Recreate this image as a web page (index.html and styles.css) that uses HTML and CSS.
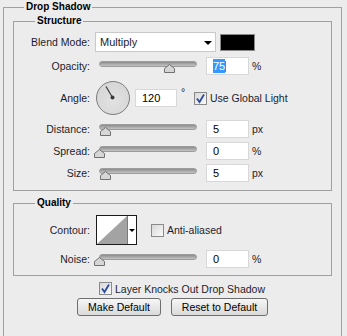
FILE: index.html
```html
<!DOCTYPE html>
<html lang="en">
<head>
  <meta charset="UTF-8">
  <meta name="viewport" content="width=device-width, initial-scale=1.0">
  <title>Layer Style - Drop Shadow</title>
  <link rel="stylesheet" href="styles.css">
</head>
<body>
  <fieldset class="group outer">
    <legend>Drop Shadow</legend>

    <fieldset class="group sub structure">
      <legend>Structure</legend>

      <div class="row blend">
        <span class="lbl">Blend Mode:</span>
        <div class="select">Multiply<span class="caret"></span></div>
        <div class="swatch"></div>
      </div>

      <div class="row opacity">
        <span class="lbl">Opacity:</span>
        <div class="slider"><span class="track"></span><span class="thumb" style="left: 69px"></span></div>
        <div class="field"><span class="sel">75</span><span class="cursor"></span></div>
        <span class="unit">%</span>
      </div>

      <div class="row angle">
        <span class="lbl">Angle:</span>
        <div class="dial">
          <svg width="34" height="34" viewBox="0 0 34 34">
            <line x1="16.5" y1="16.5" x2="10" y2="5.5" stroke="#3a3a3a" stroke-width="1.2"/>
            <circle cx="16.5" cy="16.5" r="2" fill="#3a3a3a"/>
          </svg>
        </div>
        <div class="field small">120</div>
        <span class="deg">°</span>
        <span class="check on"><svg width="11" height="11" viewBox="0 0 11 11"><path d="M2 5.5 L4.5 9 L9 1.5" fill="none" stroke="#2c4c9c" stroke-width="1.8"/></svg></span>
        <span class="check-text">Use Global Light</span>
      </div>

      <div class="row dist">
        <span class="lbl">Distance:</span>
        <div class="slider"><span class="track"></span><span class="thumb" style="left: 5px"></span></div>
        <div class="field">5</div>
        <span class="unit">px</span>
      </div>

      <div class="row spread">
        <span class="lbl">Spread:</span>
        <div class="slider"><span class="track"></span><span class="thumb" style="left: -1px"></span></div>
        <div class="field">0</div>
        <span class="unit">%</span>
      </div>

      <div class="row size">
        <span class="lbl">Size:</span>
        <div class="slider"><span class="track"></span><span class="thumb" style="left: 5px"></span></div>
        <div class="field">5</div>
        <span class="unit">px</span>
      </div>
    </fieldset>

    <fieldset class="group sub quality">
      <legend>Quality</legend>

      <div class="row contour">
        <span class="lbl">Contour:</span>
        <div class="contour-box">
          <svg class="curve" width="30" height="28" viewBox="0 0 30 28">
            <polygon points="0,28 30,0 30,28" fill="#a3a3a3"/>
          </svg>
          <span class="contour-arrow"><span class="caret"></span></span>
        </div>
        <span class="check"></span>
        <span class="check-text">Anti-aliased</span>
      </div>

      <div class="row noise">
        <span class="lbl">Noise:</span>
        <div class="slider"><span class="track"></span><span class="thumb" style="left: -1px"></span></div>
        <div class="field">0</div>
        <span class="unit">%</span>
      </div>
    </fieldset>

    <div class="knock">
      <span class="check on"><svg width="11" height="11" viewBox="0 0 11 11"><path d="M2 5.5 L4.5 9 L9 1.5" fill="none" stroke="#2c4c9c" stroke-width="1.8"/></svg></span>
      <span class="check-text">Layer Knocks Out Drop Shadow</span>
    </div>

    <div class="buttons">
      <button class="btn make">Make Default</button>
      <button class="btn reset">Reset to Default</button>
    </div>
  </fieldset>
</body>
</html>
```

FILE: styles.css
```css
body {
  margin: 0;
  background: #ececec;
  font-family: 'Liberation Sans', Arial, sans-serif;
  font-size: 10.5px;
  color: #1c1c2c;
  overflow: hidden;
}

.group {
  margin: 0;
  padding: 0;
  border: 1px solid #a0a0a0;
  min-width: 0;
}

.group legend {
  padding: 0 2px;
  font-size: 10px;
  font-weight: bold;
  line-height: 14px;
  color: #000;
}

.outer {
  width: 319px;
  margin-left: 3px;
  padding: 0 9px 40px;
}

.outer > legend {
  margin-left: 11px;
}

.sub > legend {
  margin-left: 21px;
}

.structure {
  padding-bottom: 8px;
}

.quality {
  margin-top: 5px;
  padding-bottom: 7px;
}

.row {
  display: flex;
  align-items: center;
  height: 18px;
  margin-top: 4px;
}

.lbl {
  width: 76px;
  margin-right: 5px;
  text-align: right;
}

.blend {
  height: 20px;
  margin-top: 4px;
}

.opacity {
  margin-top: 5px;
}

.angle {
  height: 34px;
  margin-top: 6px;
}

.dist {
  margin-top: 5px;
}

.contour {
  height: 30px;
  margin-top: 5px;
}

.noise {
  margin-top: 5px;
}

/* dropdown + colour */
.select {
  position: relative;
  box-sizing: border-box;
  width: 121px;
  height: 20px;
  padding-left: 4px;
  line-height: 18px;
  background: #fff;
  border: 1px solid #c9c9c9;
  font-size: 11px;
}

.caret {
  display: inline-block;
  width: 0;
  height: 0;
  border-left: 4px solid transparent;
  border-right: 4px solid transparent;
  border-top: 4px solid #000;
}

.select .caret {
  position: absolute;
  right: 3px;
  top: 8px;
}

.swatch {
  box-sizing: border-box;
  width: 35px;
  height: 17px;
  margin-left: 4px;
  background: #000;
  border: 1px solid #8a8a8a;
}

/* sliders */
.slider {
  position: relative;
  width: 106px;
  height: 18px;
}

.track {
  position: absolute;
  left: 4px;
  right: 4px;
  top: 4px;
  height: 4px;
  border-radius: 3px;
  background: linear-gradient(#8c8c8c, #c4c4c4);
  border: 1px solid #9c9c9c;
}

.thumb {
  position: absolute;
  top: 7px;
  width: 11px;
  height: 9px;
  background: url("data:image/svg+xml;utf8,<svg xmlns='http://www.w3.org/2000/svg' width='11' height='9'><path d='M0.5 8.5 V4.5 L5.5 0.5 L10.5 4.5 V8.5 Z' fill='%23d6d6d6' stroke='%23707070'/></svg>") no-repeat;
}

.field {
  box-sizing: border-box;
  width: 43px;
  height: 18px;
  margin-left: 5px;
  padding-left: 6px;
  line-height: 16px;
  background: #fff;
  border: 1px solid #d8d8d8;
  color: #000;
  font-size: 11px;
}

.field.small {
  width: 42px;
  margin-left: 5px;
}

.sel {
  background: #3399ff;
  color: #fff;
  padding: 1px 0;
}

.cursor {
  display: inline-block;
  width: 1px;
  height: 11px;
  vertical-align: -2px;
  background: #d46a00;
}

.unit {
  margin-left: 3px;
}

/* angle */
.dial {
  box-sizing: border-box;
  width: 34px;
  height: 34px;
  margin-left: 1px;
  border: 1px solid #7c7c7c;
  border-radius: 50%;
  background: radial-gradient(circle at 50% 60%, #e2e2e2, #d2d2d2);
}

.dial svg {
  display: block;
  margin: -1px;
}

.deg {
  align-self: flex-start;
  margin-top: 5px;
  margin-left: 4px;
  width: 8px;
}

.check {
  box-sizing: border-box;
  display: inline-flex;
  align-items: center;
  justify-content: center;
  width: 13px;
  height: 13px;
  border: 1px solid #8a8a8a;
  background: linear-gradient(135deg, #d8d8d8, #fafafa);
}

.angle .check {
  margin-left: 5px;
}

.check-text {
  margin-left: 3px;
}

/* contour */
.contour-box {
  display: flex;
  box-sizing: border-box;
  width: 41px;
  height: 30px;
  margin-left: 1px;
  border: 1px solid #1a1a1a;
  background: #fff;
}

.curve {
  display: block;
  width: 30px;
  height: 28px;
  border-right: 1px solid #7a7a7a;
}

.contour-arrow {
  flex: 1;
  display: flex;
  align-items: center;
  justify-content: center;
}

.contour-arrow .caret {
  border-left-width: 3px;
  border-right-width: 3px;
  border-top-width: 3px;
}

.contour .check {
  margin-left: 14px;
}

/* bottom */
.knock {
  display: flex;
  align-items: center;
  margin-top: 6px;
  padding-left: 86px;
}

.buttons {
  display: flex;
  justify-content: center;
  gap: 10px;
  margin-top: 3px;
}

.btn {
  height: 18px;
  padding: 0;
  border: 1px solid #6e6e6e;
  border-radius: 3px;
  background: linear-gradient(#f6f6f6, #dadada);
  font-family: inherit;
  font-size: 10.5px;
  color: #000;
}

.make {
  width: 84px;
}

.reset {
  width: 97px;
}
```
